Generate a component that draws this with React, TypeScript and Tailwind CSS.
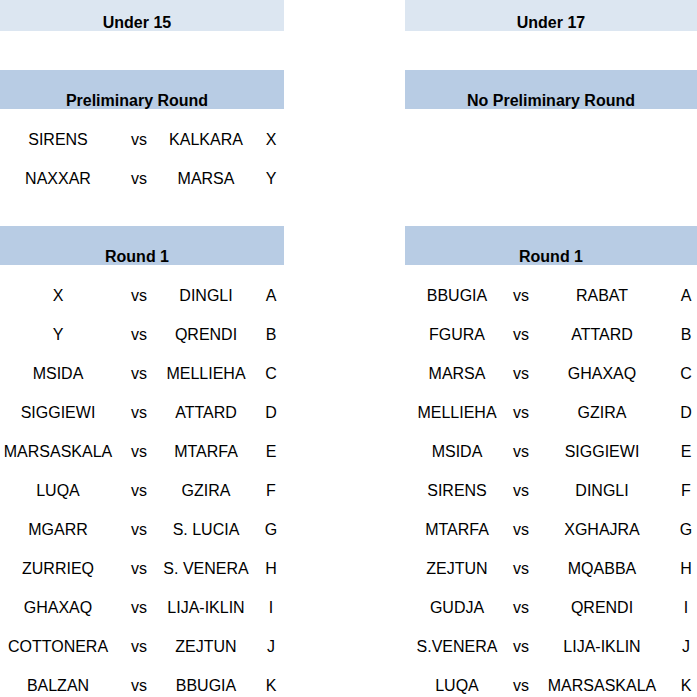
import React from 'react';

type Match = [string, string, string];

const u15Prelim: Match[] = [
  ['SIRENS', 'KALKARA', 'X'],
  ['NAXXAR', 'MARSA', 'Y'],
];

const u15Round1: Match[] = [
  ['X', 'DINGLI', 'A'],
  ['Y', 'QRENDI', 'B'],
  ['MSIDA', 'MELLIEHA', 'C'],
  ['SIGGIEWI', 'ATTARD', 'D'],
  ['MARSASKALA', 'MTARFA', 'E'],
  ['LUQA', 'GZIRA', 'F'],
  ['MGARR', 'S. LUCIA', 'G'],
  ['ZURRIEQ', 'S. VENERA', 'H'],
  ['GHAXAQ', 'LIJA-IKLIN', 'I'],
  ['COTTONERA', 'ZEJTUN', 'J'],
  ['BALZAN', 'BBUGIA', 'K'],
];

const u17Round1: Match[] = [
  ['BBUGIA', 'RABAT', 'A'],
  ['FGURA', 'ATTARD', 'B'],
  ['MARSA', 'GHAXAQ', 'C'],
  ['MELLIEHA', 'GZIRA', 'D'],
  ['MSIDA', 'SIGGIEWI', 'E'],
  ['SIRENS', 'DINGLI', 'F'],
  ['MTARFA', 'XGHAJRA', 'G'],
  ['ZEJTUN', 'MQABBA', 'H'],
  ['GUDJA', 'QRENDI', 'I'],
  ['S.VENERA', 'LIJA-IKLIN', 'J'],
  ['LUQA', 'MARSASKALA', 'K'],
];

const Header = ({ label, light, left }: { label: string; light?: boolean; left?: boolean }) => (
  <div
    className={`flex items-end justify-center font-bold leading-[16px] ${light ? 'h-[31px] bg-[#dce6f1]' : 'h-[39px] bg-[#b8cce4]'} ${left ? 'pr-[10px]' : ''}`}
  >
    {label}
  </div>
);

const Rows = ({ matches, left }: { matches: Match[]; left?: boolean }) => (
  <div>
    {matches.map(([home, away, tag], i) => (
      <div
        key={i}
        className={`grid h-[39px] items-end leading-[16px] whitespace-nowrap ${left ? 'grid-cols-[116px_46px_88px_34px]' : 'grid-cols-[104px_24px_138px_26px]'}`}
      >
        <div className="text-center">{home}</div>
        <div className="text-center">vs</div>
        <div className="text-center">{away}</div>
        <div className={`text-center ${left ? 'pl-2' : 'pl-[4px]'}`}>{tag}</div>
      </div>
    ))}
  </div>
);

const Blank = ({ rows = 1 }: { rows?: number }) => <div style={{ height: rows * 39 }} />;

export default function App() {
  return (
    <div className="w-[697px] h-[697px] overflow-hidden bg-white text-black text-[16px] font-['Liberation_Sans',Arial,sans-serif] flex">
      {/* Under 15 */}
      <div className="w-[284px] flex-none">
        <Header label="Under 15" light left />
        <Blank />
        <Header label="Preliminary Round" left />
        <Rows matches={u15Prelim} left />
        <Blank />
        <Header label="Round 1" left />
        <Rows matches={u15Round1} left />
      </div>

      <div className="w-[121px] flex-none" />

      {/* Under 17 */}
      <div className="w-[292px] flex-none">
        <Header label="Under 17" light />
        <Blank />
        <Header label="No Preliminary Round" />
        <Blank rows={3} />
        <Header label="Round 1" />
        <Rows matches={u17Round1} />
      </div>
    </div>
  );
}
